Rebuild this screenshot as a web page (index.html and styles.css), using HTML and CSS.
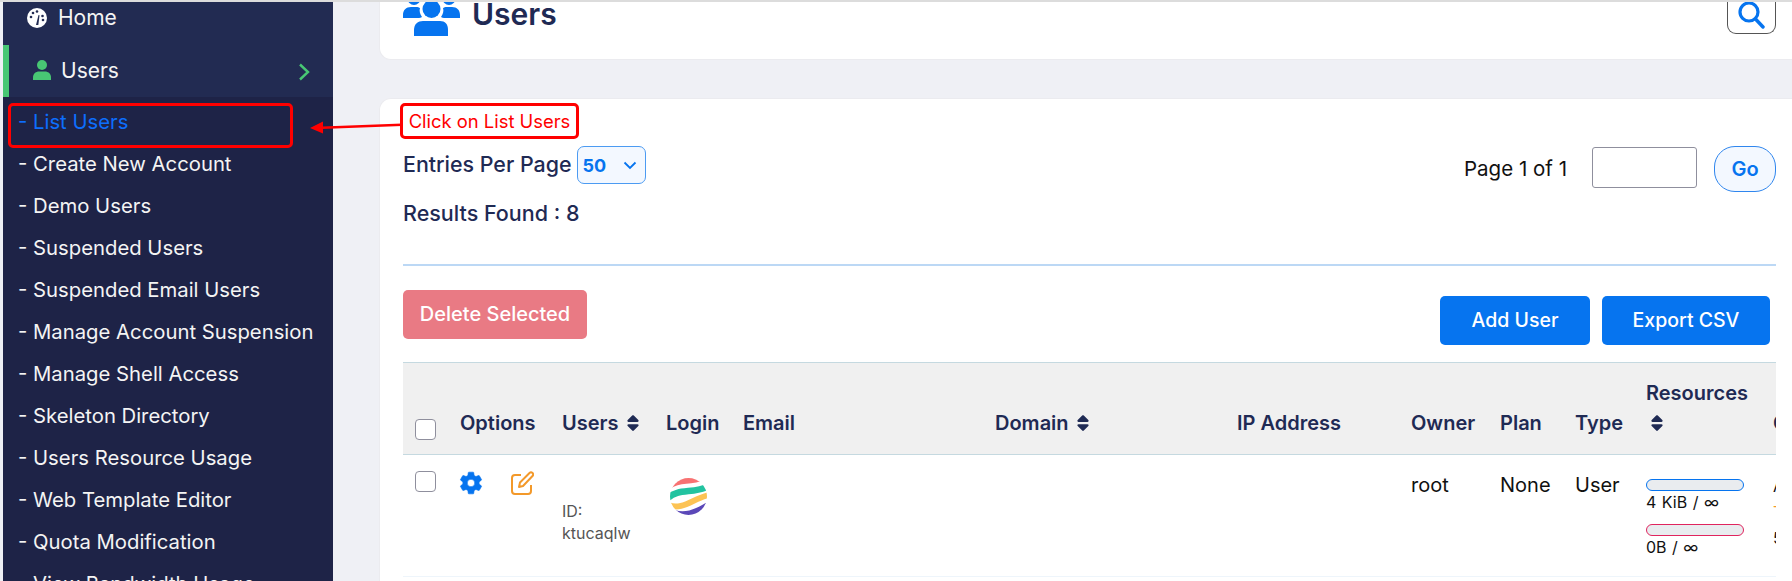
FILE: index.html
```html
<!DOCTYPE html>
<html lang="en">
<head>
<meta charset="utf-8">
<title>Users</title>
<link rel="stylesheet" href="styles.css">
</head>
<body>
<div class="page">
  <aside class="sidebar">
    <div class="nav-item nav-home">
      <svg class="ico-home" viewBox="0 0 20 20"><circle cx="10" cy="10" r="10" fill="#fff"/><path d="M9 17 L11.5 7 L12.5 7.3 L11.3 17Z" fill="#222b52"/><circle cx="4" cy="9" r="1.3" fill="#222b52"/><circle cx="6" cy="5" r="1.3" fill="#222b52"/><circle cx="10" cy="3.5" r="1.3" fill="#222b52"/><circle cx="15.5" cy="8" r="1.3" fill="#222b52"/><circle cx="16" cy="12" r="1.3" fill="#222b52"/></svg>
      <span>Home</span>
    </div>
    <div class="nav-item nav-active">
      <svg class="ico-user" viewBox="0 0 18 20"><circle cx="9" cy="5" r="5" fill="#48c774"/><path d="M0 20 V17.5 C0 13.5 3 11.5 6 11.5 H12 C15 11.5 18 13.5 18 17.5 V20Z" fill="#48c774"/></svg>
      <span class="nav-label">Users</span>
      <svg class="ico-chevron" viewBox="0 0 12 18"><path d="M2 1.5 L10 9 L2 16.5" fill="none" stroke="#48c774" stroke-width="2.4"/></svg>
    </div>
    <ul class="submenu">
      <li class="current">- List Users</li>
      <li>- Create New Account</li>
      <li>- Demo Users</li>
      <li>- Suspended Users</li>
      <li>- Suspended Email Users</li>
      <li>- Manage Account Suspension</li>
      <li>- Manage Shell Access</li>
      <li>- Skeleton Directory</li>
      <li>- Users Resource Usage</li>
      <li>- Web Template Editor</li>
      <li>- Quota Modification</li>
      <li>- View Bandwidth Usage</li>
    </ul>
  </aside>
  <main class="main">
    <section class="card card-head">
      <svg class="ico-group" viewBox="0 0 57 34">
        <g fill="#0674ef">
          <circle cx="28.5" cy="7" r="9"/>
          <path d="M11 34 V28 C11 22 15 19 20 19 H37 C42 19 45 22 45 28 V34Z"/>
          <circle cx="11" cy="-3.5" r="6.5"/>
          <circle cx="46" cy="-3.5" r="6.5"/>
          <path d="M0 16 V13 C0 8 3 5 8 5 H13 C15 5 16 5.500 17 6 C16 9 17 12 19 15 C18 15.500 17 16 16 16Z"/>
          <path d="M57 16 V13 C57 8 54 5 49 5 H44 C42 5 41 5.500 40 6 C41 9 40 12 38 15 C39 15.500 40 16 41 16Z"/>
        </g>
      </svg>
      <h1 class="title">Users</h1>
      <button class="search-btn" type="button" aria-label="Search">
        <svg viewBox="0 0 27 27"><circle cx="11" cy="10" r="9" fill="none" stroke="#0674ef" stroke-width="3.200"/><path d="M17.500 17 L25 25" stroke="#0674ef" stroke-width="3.400" stroke-linecap="round"/></svg>
      </button>
    </section>
    <section class="card card-list">
      <div class="toolbar">
        <div class="toolbar-left">
          <div class="entries">
            <span class="entries-label">Entries Per Page</span>
            <div class="select"><b>50</b><svg viewBox="0 0 14 9"><path d="M1.500 1.500 L7 7 L12.500 1.500" fill="none" stroke="#0674ef" stroke-width="1.800"/></svg></div>
          </div>
          <div class="results">Results Found : 8</div>
        </div>
        <div class="pager">
          <span class="pager-text">Page 1 of 1</span>
          <input class="pager-input" type="text" aria-label="Page">
          <button class="go" type="button">Go</button>
        </div>
      </div>
      <hr class="rule">
      <div class="actions">
        <button class="btn btn-delete" type="button">Delete Selected</button>
        <div class="actions-right">
          <button class="btn btn-primary btn-add" type="button">Add User</button>
          <button class="btn btn-primary btn-export" type="button">Export CSV</button>
        </div>
      </div>
      <div class="table-clip">
        <table class="users">
          <colgroup>
            <col class="c-check"><col class="c-options"><col class="c-users"><col class="c-login"><col class="c-email"><col class="c-domain"><col class="c-ip"><col class="c-owner"><col class="c-plan"><col class="c-type"><col class="c-res"><col class="c-last">
          </colgroup>
          <thead>
            <tr>
              <th class="th-check"><input class="check" type="checkbox" aria-label="Select all"></th>
              <th>Options</th>
              <th>Users <svg class="sort" viewBox="0 0 320 512"><path d="M137.400 41.400c12.500-12.500 32.800-12.500 45.300 0l128 128c9.200 9.200 11.900 22.900 6.900 34.900s-16.600 19.800-29.600 19.800H32c-12.900 0-24.600-7.800-29.600-19.800s-2.200-25.700 6.900-34.900l128-128zm0 429.300l-128-128c-9.200-9.200-11.900-22.900-6.900-34.900s16.600-19.800 29.600-19.800H288c12.900 0 24.600 7.800 29.600 19.800s2.200 25.700-6.900 34.900l-128 128c-12.500 12.500-32.800 12.500-45.300 0z"/></svg></th>
              <th>Login</th>
              <th>Email</th>
              <th>Domain <svg class="sort" viewBox="0 0 320 512"><path d="M137.400 41.400c12.500-12.500 32.800-12.500 45.300 0l128 128c9.200 9.200 11.900 22.900 6.900 34.900s-16.600 19.800-29.600 19.800H32c-12.900 0-24.600-7.800-29.600-19.800s-2.200-25.700 6.900-34.900l128-128zm0 429.300l-128-128c-9.200-9.200-11.900-22.900-6.900-34.900s16.600-19.800 29.600-19.800H288c12.900 0 24.600 7.800 29.600 19.800s2.200 25.700-6.900 34.900l-128 128c-12.500 12.500-32.800 12.500-45.300 0z"/></svg></th>
              <th>IP Address</th>
              <th>Owner</th>
              <th>Plan</th>
              <th>Type</th>
              <th>Resources<br><svg class="sort sort-res" viewBox="0 0 320 512"><path d="M137.400 41.400c12.500-12.500 32.800-12.500 45.300 0l128 128c9.200 9.200 11.900 22.900 6.900 34.900s-16.600 19.800-29.600 19.800H32c-12.900 0-24.600-7.800-29.600-19.800s-2.200-25.700 6.900-34.900l128-128zm0 429.300l-128-128c-9.200-9.200-11.900-22.900-6.900-34.900s16.600-19.800 29.600-19.800H288c12.900 0 24.600 7.800 29.600 19.800s2.200 25.700-6.900 34.900l-128 128c-12.500 12.500-32.800 12.500-45.300 0z"/></svg></th>
              <th>C</th>
            </tr>
          </thead>
          <tbody>
            <tr>
              <td><input class="check" type="checkbox" aria-label="Select row"></td>
              <td class="td-options">
                <div class="option-icons">
                  <svg class="ico-gear" viewBox="0 0 24 24"><path fill="#0674ef" stroke="#0674ef" stroke-width=".6" d="M12,15.500A3.500,3.500 0 0,1 8.500,12A3.500,3.500 0 0,1 12,8.500A3.500,3.500 0 0,1 15.500,12A3.500,3.500 0 0,1 12,15.500M19.430,12.970C19.470,12.650 19.500,12.330 19.500,12C19.500,11.670 19.470,11.340 19.430,11L21.540,9.370C21.730,9.220 21.780,8.950 21.660,8.730L19.660,5.270C19.540,5.050 19.270,4.960 19.050,5.050L16.560,6.050C16.040,5.660 15.500,5.320 14.870,5.070L14.500,2.420C14.460,2.180 14.250,2 14,2H10C9.750,2 9.540,2.180 9.500,2.420L9.130,5.070C8.500,5.320 7.960,5.660 7.440,6.050L4.950,5.050C4.730,4.960 4.460,5.050 4.340,5.270L2.340,8.730C2.210,8.950 2.270,9.220 2.460,9.370L4.570,11C4.530,11.340 4.500,11.670 4.500,12C4.500,12.330 4.530,12.650 4.570,12.970L2.460,14.630C2.270,14.780 2.210,15.050 2.340,15.270L4.340,18.730C4.460,18.950 4.730,19.030 4.950,18.950L7.440,17.940C7.960,18.340 8.500,18.680 9.130,18.930L9.500,21.580C9.540,21.820 9.750,22 10,22H14C14.250,22 14.460,21.820 14.500,21.580L14.870,18.930C15.500,18.670 16.040,18.340 16.560,17.940L19.050,18.950C19.270,19.030 19.540,18.950 19.660,18.730L21.660,15.270C21.780,15.050 21.730,14.780 21.540,14.630L19.430,12.970Z"/></svg>
                  <svg class="ico-edit" viewBox="0 0 24 24" fill="none" stroke="#f3992a" stroke-width="2" stroke-linejoin="round"><path d="M11 4H5a3 3 0 0 0-3 3v13a3 3 0 0 0 3 3h13a3 3 0 0 0 3-3v-6"/><path d="M9 16l1-4.500L19.500 2a2 2 0 0 1 3 3L13 15z"/></svg>
                </div>
              </td>
              <td class="td-user"><div>ID:</div><div>ktucaqlw</div></td>
              <td class="td-logo">
                <svg class="logo" viewBox="0 0 37 37">
                  <defs><clipPath id="ball"><circle cx="18.500" cy="18.500" r="18.500"/></clipPath></defs>
                  <g clip-path="url(#ball)" fill="none">
                    <path d="M-2 13 C8 2 22 9 39 0 L39 -4 L-2 -4Z" fill="#f87272"/>
                    <path d="M-2 20 C8 10 24 16 39 8" stroke="#22c3a0" stroke-width="6.500"/>
                    <path d="M-2 27 C12 33 24 20 39 17" stroke="#fcc354" stroke-width="6"/>
                    <path d="M5 32 C16 36 28 30 39 23 V39 H5Z" fill="#5b48b8"/>
                  </g>
                </svg>
              </td>
              <td></td>
              <td></td>
              <td></td>
              <td class="td-plain">root</td>
              <td class="td-plain">None</td>
              <td class="td-plain">User</td>
              <td class="td-res">
                <div class="bar bar-blue"></div>
                <div class="bar-text">4 KiB / ∞</div>
                <div class="bar bar-pink"></div>
                <div class="bar-text">0B / ∞</div>
              </td>
              <td class="td-last"><div>A</div><div class="orange">T</div><div>5</div></td>
            </tr>
          </tbody>
        </table>
      </div>
    </section>
  </main>
  <div class="callout-box"></div>
  <svg class="callout-arrow" viewBox="0 0 92 14"><path d="M12 6.500 L92 3.500 L92 6 L12 9Z" fill="#f00"/><path d="M0 8 L13 1.500 L13 13.500Z" fill="#f00"/></svg>
  <div class="callout-label">Click on List Users</div>
</div>
</body>
</html>
```
FILE: styles.css
```css
* { box-sizing: border-box; }
html, body { margin: 0; padding: 0; }
body { width: 1792px; height: 581px; overflow: hidden; background: #eff0f5; font-family: "Inter", "Liberation Sans", sans-serif; color: #1f2a54; }
.page { position: relative; display: flex; width: 1792px; height: 581px; overflow: hidden; border-top: 2px solid #dcdcdc; padding-left: 3px; background: #eff0f5; }
.sidebar { flex: 0 0 330px; height: 579px; overflow: hidden; background: #222b52; color: #f4f4f4; }
.nav-item { display: flex; align-items: center; font-size: 21px; }
.nav-home { height: 43px; padding: 0 0 12px 24px; }
.nav-home span { margin-left: 11px; }
.ico-home { width: 20px; height: 20px; flex: none; }
.nav-active { height: 52px; border-left: 6px solid #48c774; padding: 0 23px 2px 24px; }
.ico-user { width: 18px; height: 20px; flex: none; }
.nav-label { margin-left: 10px; flex: 1; }
.ico-chevron { width: 12px; height: 18px; flex: none; margin-top: 4px; }
.submenu { list-style: none; margin: 0; padding: 4px 0 0 15px; background: #1e2347; height: 500px; }
.submenu li { height: 42px; line-height: 42px; font-size: 20.300px; white-space: nowrap; }
.submenu li.current { color: #0d6efd; }
.main { flex: 1; min-width: 0; padding-left: 46px; }
.card { background: #fff; border: 1px solid #ebebef; border-right: 0; }
.card-head { display: flex; align-items: flex-start; height: 58px; border-top: 0; border-radius: 0 0 0 12px; padding: 0 16px 0 23px; }
.ico-group { width: 57px; height: 34px; flex: none; }
.title { margin: 0 0 0 12px; flex: 1; font-size: 30px; line-height: 24px; font-weight: 600; color: #1f2a54; }
.search-btn { width: 49px; height: 32px; padding: 0 0 0 10px; display: flex; align-items: flex-start; background: #fff; border: 1px solid #555; border-top: 0; border-radius: 0 0 9px 9px; }
.search-btn svg { width: 27px; height: 27px; }
.card-list { margin-top: 38px; height: 520px; border-bottom: 0; border-radius: 12px 0 0 0; padding: 47px 16px 0 23px; }
.toolbar { display: flex; justify-content: space-between; align-items: flex-start; height: 82px; }
.entries { display: flex; align-items: center; gap: 5px; height: 38px; font-size: 21.400px; font-weight: 500; }
.entries-label { margin-top: -2px; }
.select { display: flex; align-items: center; justify-content: space-between; width: 69px; height: 38px; padding: 0 8px 0 5px; background: #f3f8ff; border: 1px solid #4c9bf2; border-radius: 7px; color: #0674ef; font-size: 18px; }
.select svg { width: 14px; height: 9px; }
.results { margin-top: 14px; line-height: 30px; font-size: 21.500px; font-weight: 500; }
.pager { display: flex; align-items: center; height: 46px; }
.pager-text { margin-bottom: 2px; font-size: 20.500px; color: #111; }
.pager-input { width: 105px; height: 41px; margin: -3px 0 0 25px; border: 1px solid #8f8f9d; border-radius: 3px; background: #fff; }
.go { width: 62px; height: 46px; margin-left: 17px; border: 1px solid #2f86ee; border-radius: 21px; background: #f3f8ff; color: #0674ef; font: 600 20px "Inter", "Liberation Sans", sans-serif; }
.rule { height: 2px; margin: 36px 0 0; border: 0; background: #bcd8f5; }
.actions { display: flex; justify-content: space-between; align-items: flex-start; height: 55px; margin-top: 24px; }
.actions-right { display: flex; gap: 12px; margin: 6px 6px 0 0; }
.btn { height: 49px; padding: 0 0 2px; border: 0; border-radius: 5px; color: #fff; font: 500 19.500px "Inter", "Liberation Sans", sans-serif; }
.btn-delete { width: 184px; background: #e97a84; font-size: 20px; }
.btn-primary { background: #0674ef; }
.btn-add { width: 150px; }
.btn-export { width: 168px; }
.table-clip { width: 1373px; margin-top: 17px; overflow: hidden; }
.users { width: 1420px; table-layout: fixed; border-collapse: collapse; }
.c-check { width: 57px; }
.c-options { width: 102px; }
.c-users { width: 104px; }
.c-login { width: 77px; }
.c-email { width: 252px; }
.c-domain { width: 242px; }
.c-ip { width: 174px; }
.c-owner { width: 89px; }
.c-plan { width: 75px; }
.c-type { width: 71px; }
.c-res { width: 127px; }
.c-last { width: 50px; }
.users thead tr { height: 92px; background: #f0f0f0; border-top: 1px solid #c5d9e0; border-bottom: 1px solid #c5d9e0; }
.users th { padding: 0 0 16px; vertical-align: bottom; text-align: left; font-size: 20px; line-height: 30px; font-weight: 600; color: #1f2a54; white-space: nowrap; }
.th-check .check { display: block; }
.users th.th-check { padding-bottom: 14px; }
.check { appearance: none; width: 21px; height: 21px; margin: 0 0 0 12px; border: 1px solid #8f8f9d; border-radius: 4px; background: #fff; }
.sort { width: 14px; height: 18px; fill: #1f2a54; vertical-align: -2px; margin-left: 2px; }
.sort-res { margin-left: 4px; }
.users tbody tr { height: 122px; border-bottom: 1px solid #eef5fb; }
.users td { padding: 15px 0 0; vertical-align: top; font-size: 20px; line-height: 30px; color: #111; }
.option-icons { display: flex; gap: 26px; margin-top: 1px; }
.ico-gear { width: 26px; height: 26px; margin: -1px 0 0 -2px; flex: none; }
.ico-edit { width: 24px; height: 24px; flex: none; }
.users td.td-user { padding-top: 45px; font-size: 16px; line-height: 22px; color: #555; }
.users td.td-logo { padding: 23px 0 0 4px; }
.logo { display: block; width: 37px; height: 37px; }
.users td.td-res { padding-top: 24px; }
.bar { width: 98px; height: 12px; border: 1px solid; border-radius: 6px; background: #e9ecef; }
.bar-blue { border-color: #0674ef; }
.bar-pink { margin-top: 11px; border-color: #e0245e; }
.bar-text { font-size: 16px; line-height: 22px; word-spacing: 1px; color: #111; }
.users td.td-last { padding-top: 18px; font-size: 16px; line-height: 26px; }
.orange { color: #f3992a; }
.callout-box { position: absolute; left: 8px; top: 101px; width: 285px; height: 45px; border: 3px solid #f00; border-radius: 5px; }
.callout-arrow { position: absolute; left: 310px; top: 118px; width: 92px; height: 14px; }
.callout-label { position: absolute; left: 400px; top: 101px; width: 179px; height: 36px; display: flex; align-items: center; justify-content: center; background: #fff; border: 3px solid #f00; border-radius: 5px; color: #f00; font-size: 18.400px; white-space: nowrap; }
```
